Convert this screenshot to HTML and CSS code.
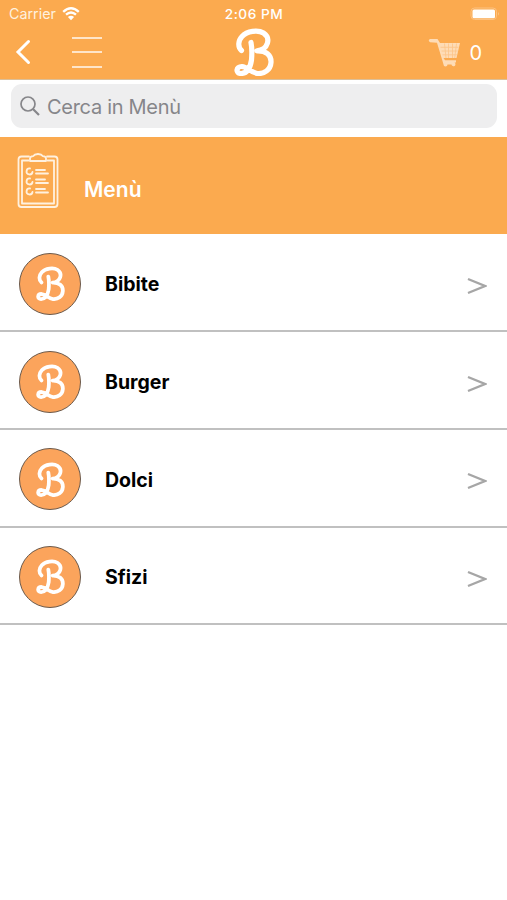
FILE: index.html
```html
<!DOCTYPE html>
<html lang="it">
<head>
    <meta charset="UTF-8">
    <meta name="viewport" content="width=device-width, initial-scale=1.0">
    <title>Menù</title>
    <link rel="stylesheet" href="styles.css">
</head>
<body>
    <svg class="simboli" aria-hidden="true">
        <symbol id="logo" viewBox="0 0 40 48">
            <path d="M7.500 22.500C3.500 19 4.200 12.500 8 8.500C13 3 24 1.500 29.500 5C37 10 34.500 21.500 23 22.800C32 22.500 37.500 27 37 34.500C36.500 42 30 46 23.500 45.500C16.500 44.500 13.500 38.800 8 38.500C1.800 38.300 1.200 45.500 7 45.500C13.500 45.500 16.500 38.500 17.500 32C18 26 18.200 20.500 17 14.500"/>
        </symbol>
    </svg>

    <header>
        <div class="stato">
            <div class="rete">
                <span>Carrier</span>
                <svg width="18" height="14" viewBox="0 0 18 14">
                    <path d="M1.200 4.800Q9-2.200 16.800 4.800M4 7.700Q9 3.300 14 7.700" fill="none" stroke="#fff" stroke-width="2.400"/>
                    <path d="M5.900 10Q9 7.600 12.100 10L9 13.200Z" fill="#fff"/>
                </svg>
            </div>
            <span class="ora">2:06 PM</span>
            <div class="batteria">
                <svg width="31" height="14" viewBox="0 0 31 14">
                    <rect x="1" y="1" width="25.500" height="11.500" rx="3.500" fill="none" stroke="#fcc282" stroke-width="1"/>
                    <rect x="2.500" y="2.500" width="22.500" height="8.800" rx="1.500" fill="#fff"/>
                    <path d="M28 5Q30 6.800 28 8.600Z" fill="#fcc282"/>
                </svg>
            </div>
        </div>
        <nav>
            <div class="sinistra">
                <svg class="indietro" width="16" height="26" viewBox="0 0 16 26">
                    <path d="M13.500 2.500L3 13L13.500 23.500"/>
                </svg>
                <div class="hamburger"><i></i><i></i><i></i></div>
            </div>
            <svg class="logo" width="40" height="48"><use href="#logo"/></svg>
            <div class="carrello">
                <svg width="33" height="30" viewBox="0 0 33 30">
                    <path d="M2 1H9.500L12 5H32L28.500 20H15.500L17 22.200H28V24.500H26.500A2 2 0 1 1 23.500 26.500H19.500A2 2 0 1 1 15.500 26.500L14.500 23L9 4.800L2 4.200Q-0.500 2.500 2 1Z" fill="#fedcb6"/>
                    <path d="M12.500 9.300H30.500M13.500 13H29.700M14.500 16.800H28.900M16.500 5.500L18 20M20.500 5.500V20M24.500 5.500V20M28.500 5.500L26.700 20" stroke="#fcc488" stroke-width="0.800"/>
                </svg>
                <span>0</span>
            </div>
        </nav>
    </header>

    <div class="cerca">
        <label>
            <svg width="22" height="22" viewBox="0 0 22 22">
                <circle cx="8" cy="9" r="7" fill="none" stroke="#86868a" stroke-width="1.700"/>
                <path d="M13 14L19 20" stroke="#86868a" stroke-width="2.200"/>
            </svg>
            <span>Cerca in Menù</span>
        </label>
    </div>

    <div class="titolo">
        <svg width="42" height="56" viewBox="0 0 42 56" fill="none" stroke="#fff1df" stroke-width="1.800" stroke-linejoin="round" stroke-linecap="round">
            <path d="M12 3.500H4.500Q1.500 3.500 1.500 6.500V51Q1.500 54 4.500 54H37.500Q40.500 54 40.500 51V6.500Q40.500 3.500 37.500 3.500H30"/>
            <path d="M11.500 7.500H5V50.500H37V7.500H30.500"/>
            <path d="M13 8V5.500Q13 3.500 16 3.200Q17.500 1 21 1T26 3.200Q29 3.500 29 5.500V8Z"/>
            <path d="M13 15.500A3 3 0 1 0 15.500 19M13 25.500A3 3 0 1 0 15.500 29M13 35.500A3 3 0 1 0 15.500 39"/>
            <path d="M19 17H28M19 20.500H31M19 26.500H28M19 30H31M19 36H28M19 39.500H31"/>
        </svg>
        <h1>Menù</h1>
    </div>

    <ul>
        <li>
            <div class="cerchio"><svg width="29" height="35"><use href="#logo"/></svg></div>
            <span>Bibite</span>
            <svg class="freccia" width="20" height="18" viewBox="0 0 20 18"><path d="M1 2L18 9L1 16"/></svg>
        </li>
        <li>
            <div class="cerchio"><svg width="29" height="35"><use href="#logo"/></svg></div>
            <span>Burger</span>
            <svg class="freccia" width="20" height="18" viewBox="0 0 20 18"><path d="M1 2L18 9L1 16"/></svg>
        </li>
        <li>
            <div class="cerchio"><svg width="29" height="35"><use href="#logo"/></svg></div>
            <span>Dolci</span>
            <svg class="freccia" width="20" height="18" viewBox="0 0 20 18"><path d="M1 2L18 9L1 16"/></svg>
        </li>
        <li>
            <div class="cerchio"><svg width="29" height="35"><use href="#logo"/></svg></div>
            <span>Sfizi</span>
            <svg class="freccia" width="20" height="18" viewBox="0 0 20 18"><path d="M1 2L18 9L1 16"/></svg>
        </li>
    </ul>
</body>
</html>
```

FILE: styles.css
```css
:root {
    --arancio: #fbaa4f;
    --arancio-logo: #fba45c;
    --grigio: #86868a;
    --linea: #c0c0c0;
}

* {
    box-sizing: border-box;
}

body {
    margin: 0;
    font-family: Inter, sans-serif;
    background-color: white;
    color: black;
}

svg {
    display: block;
    flex-shrink: 0;
}

.simboli {
    display: none;
}

#logo path {
    fill: none;
    stroke: white;
    stroke-width: 5.2;
    stroke-linecap: round;
    stroke-linejoin: round;
}

header {
    height: 80px;
    background-color: var(--arancio);
    border-bottom: 1px solid #dcbf98;
    color: white;
}

.stato {
    display: grid;
    grid-template-columns: 1fr auto 1fr;
    align-items: center;
    height: 27px;
    padding: 0 8px 0 9px;
}

.rete {
    display: flex;
    align-items: center;
    gap: 6px;
    color: #fff1df;
    font-size: 14.3px;
}

.ora {
    font-size: 13.7px;
    font-weight: 500;
    letter-spacing: 0.5px;
}

.batteria {
    justify-self: end;
    margin-right: -2px;
}

nav {
    display: grid;
    grid-template-columns: 1fr auto 1fr;
    align-items: center;
    height: 50px;
    padding: 0 25px 0 15px;
}

.sinistra {
    display: flex;
    align-items: center;
    gap: 41px;
}

.indietro path {
    fill: none;
    stroke: white;
    stroke-width: 3;
    stroke-linecap: round;
}

.hamburger {
    display: flex;
    flex-direction: column;
    gap: 12.5px;
    width: 30px;
}

.hamburger i {
    height: 2px;
    background-color: #fee5c9;
}

.logo {
    margin-left: 10px;
}

.carrello {
    display: flex;
    align-items: center;
    justify-content: flex-end;
    gap: 8px;
    margin-top: 2px;
    font-size: 20px;
}

.cerca {
    height: 57px;
    padding: 4px 10px 9px 11px;
}

.cerca label {
    display: flex;
    align-items: center;
    gap: 5px;
    height: 44px;
    padding-left: 9px;
    border-radius: 11px;
    background-color: #eeeeef;
    color: var(--grigio);
    font-size: 20px;
    letter-spacing: -0.3px;
}

.cerca span {
    margin-top: 2px;
}

.titolo {
    display: flex;
    height: 97px;
    padding: 16px 17px;
    gap: 25px;
    background-color: var(--arancio);
    color: white;
}

h1 {
    margin: 24px 0 0;
    font-size: 21px;
    line-height: 26px;
    font-weight: 600;
}

ul {
    list-style: none;
    margin: 0;
    padding: 0.5px 0 0;
}

li {
    display: flex;
    align-items: center;
    height: 97.7px;
    padding: 3px 20px 0 19px;
    border-bottom: 2px solid var(--linea);
    font-size: 19.5px;
    font-weight: 700;
}

li span {
    flex: 1;
    margin: 1px 0 0 24px;
}

.cerchio {
    display: flex;
    align-items: center;
    justify-content: center;
    width: 62px;
    height: 62px;
    border: 1px solid #6b5a4c;
    border-radius: 50%;
    background-color: var(--arancio-logo);
}

.freccia {
    margin-top: 4px;
}

.freccia path {
    fill: none;
    stroke: #a6a6a6;
    stroke-width: 2.3;
}
```
